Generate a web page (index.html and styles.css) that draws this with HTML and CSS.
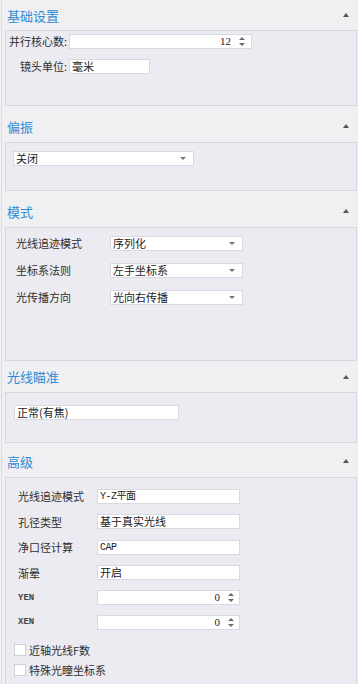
FILE: index.html
```html
<!DOCTYPE html>
<html lang="zh-CN">
<head>
    <meta charset="UTF-8">
    <meta name="viewport" content="width=device-width, initial-scale=1.0">
    <title>系统设置</title>
    <link rel="stylesheet" href="styles.css">
</head>
<body>
    <div class="panel">

        <div class="section section-first">
            <div class="section-head">
                <span>基础设置</span>
                <span class="collapse"></span>
            </div>
            <div class="box box-basic">
                <div class="form-basic">
                    <label>并行核心数:</label>
                    <div class="field spin wide">
                        <span class="value num">12</span>
                        <span class="spinner"><i class="up"></i><i class="down"></i></span>
                    </div>
                    <label>镜头单位:</label>
                    <div class="field short"><span class="value">毫米</span></div>
                </div>
            </div>
        </div>

        <div class="section">
            <div class="section-head">
                <span>偏振</span>
                <span class="collapse"></span>
            </div>
            <div class="box box-polar">
                <div class="field select polar-select">
                    <span class="value">关闭</span>
                    <span class="caret"></span>
                </div>
            </div>
        </div>

        <div class="section">
            <div class="section-head">
                <span>模式</span>
                <span class="collapse"></span>
            </div>
            <div class="box box-mode">
                <div class="form-mode">
                    <label>光线追迹模式</label>
                    <div class="field select"><span class="value">序列化</span><span class="caret"></span></div>
                    <label>坐标系法则</label>
                    <div class="field select"><span class="value">左手坐标系</span><span class="caret"></span></div>
                    <label>光传播方向</label>
                    <div class="field select"><span class="value">光向右传播</span><span class="caret"></span></div>
                </div>
            </div>
        </div>

        <div class="section section-tight">
            <div class="section-head">
                <span>光线瞄准</span>
                <span class="collapse"></span>
            </div>
            <div class="box box-aim">
                <div class="field aim-field"><span class="value">正常(有焦)</span></div>
            </div>
        </div>

        <div class="section section-last">
            <div class="section-head">
                <span>高级</span>
                <span class="collapse"></span>
            </div>
            <div class="box box-adv">
                <div class="form-adv">
                    <label>光线追迹模式</label>
                    <div class="field"><span class="value mono">Y-Z平面</span></div>
                    <label>孔径类型</label>
                    <div class="field"><span class="value">基于真实光线</span></div>
                    <label>净口径计算</label>
                    <div class="field"><span class="value mono">CAP</span></div>
                    <label>渐晕</label>
                    <div class="field"><span class="value">开启</span></div>
                    <label class="mono-label">YEN</label>
                    <div class="field spin">
                        <span class="value num">0</span>
                        <span class="spinner"><i class="up"></i><i class="down"></i></span>
                    </div>
                    <label class="mono-label">XEN</label>
                    <div class="field spin">
                        <span class="value num">0</span>
                        <span class="spinner"><i class="up"></i><i class="down"></i></span>
                    </div>
                </div>
                <div class="checks">
                    <div class="check"><span class="checkbox"></span>近轴光线F数</div>
                    <div class="check"><span class="checkbox"></span>特殊光瞳坐标系</div>
                </div>
            </div>
        </div>

    </div>
</body>
</html>
```

FILE: styles.css
```css
body {
    margin: 0;
    background-color: #f0f0f2;
    font-family: "Noto Sans CJK SC", "Noto Sans", sans-serif;
    font-size: 11px;
    color: #2e2e2e;
    overflow: hidden;
}

.panel {
    margin-left: 1px;
    border-left: 1px solid #dcdce3;
    padding: 0 1px 0 3px;
    min-height: 684px;
    box-sizing: border-box;
}

.section {
    margin-top: 4px;
}

.section-first {
    margin-top: 0;
}

.section-tight {
    margin-top: 0;
}

.section-last {
    margin-top: 2px;
}

.section-head {
    display: flex;
    justify-content: space-between;
    align-items: center;
    height: 32px;
    padding-left: 2px;
    color: #2f8bd3;
    font-size: 13px;
}

.section-first .section-head {
    height: 30px;
}

.section-tight .section-head {
    height: 31px;
}

.collapse {
    width: 0;
    height: 0;
    margin-right: 8px;
    border-left: 3.5px solid transparent;
    border-right: 3.5px solid transparent;
    border-bottom: 4px solid #555;
}

.box {
    background-color: #ecebf1;
    border: 1px solid #d8d7e0;
    box-sizing: border-box;
}

.box-basic {
    height: 76px;
    padding: 2px 0 0 0;
}

.box-polar {
    height: 49px;
    padding: 8px 0 0 7px;
}

.box-mode {
    height: 134px;
    padding: 7px 0 0 10px;
}

.box-aim {
    height: 51px;
    padding: 12px 0 0 8px;
}

.box-adv {
    height: 220px;
    padding: 10px 0 0 7px;
}

/* inputs */

.field {
    display: flex;
    align-items: center;
    height: 15px;
    background-color: #fff;
    border: 1px solid #d9d9e1;
    box-sizing: border-box;
    padding: 0 2px;
    line-height: 13px;
    color: #222;
}

.value {
    flex: 1;
    white-space: nowrap;
}

.num {
    text-align: right;
    font-family: "Liberation Serif", "DejaVu Serif", serif;
    font-size: 11px;
}

.mono {
    font-family: "Liberation Mono", "Noto Sans CJK SC", monospace;
    font-size: 10px;
    letter-spacing: -0.5px;
}

.spinner {
    display: flex;
    flex-direction: column;
    justify-content: center;
    gap: 3px;
    width: 7px;
    margin: 0 3px 0 8px;
}

.spinner i {
    display: block;
    width: 0;
    height: 0;
    border-left: 3.5px solid transparent;
    border-right: 3.5px solid transparent;
}

.spinner .up {
    border-bottom: 3px solid #6a6a6a;
}

.spinner .down {
    border-top: 3px solid #6a6a6a;
}

.caret {
    width: 0;
    height: 0;
    margin-right: 5px;
    border-left: 3px solid transparent;
    border-right: 3px solid transparent;
    border-top: 3px solid #777;
}

/* basic settings */

.form-basic {
    display: grid;
    grid-template-columns: 61px auto;
    column-gap: 2px;
    row-gap: 9px;
    align-items: center;
    justify-items: start;
}

.form-basic label {
    justify-self: end;
    text-align: right;
}

.wide {
    width: 183px;
}

.short {
    width: 81px;
}

.polar-select {
    width: 181px;
}

/* mode */

.form-mode {
    display: grid;
    grid-template-columns: 94px 133px;
    row-gap: 11px;
    align-items: center;
}

.aim-field {
    width: 165px;
}

/* advanced */

.form-adv {
    display: grid;
    grid-template-columns: 84px 143px;
    row-gap: 9.6px;
    align-items: center;
}

.form-adv label {
    padding-left: 5px;
}

.form-adv .spinner {
    margin-right: 2px;
}

.mono-label {
    font-family: "Liberation Mono", monospace;
    font-size: 9px;
    font-weight: bold;
    color: #444;
}

.checks {
    display: flex;
    flex-direction: column;
    gap: 8px;
    margin-top: 14px;
    padding-left: 1px;
}

.check {
    display: flex;
    align-items: center;
    gap: 3px;
    height: 12px;
    font-size: 11px;
}

.checkbox {
    width: 12px;
    height: 12px;
    background-color: #fff;
    border: 1px solid #cfcfd8;
    box-sizing: border-box;
}
```
